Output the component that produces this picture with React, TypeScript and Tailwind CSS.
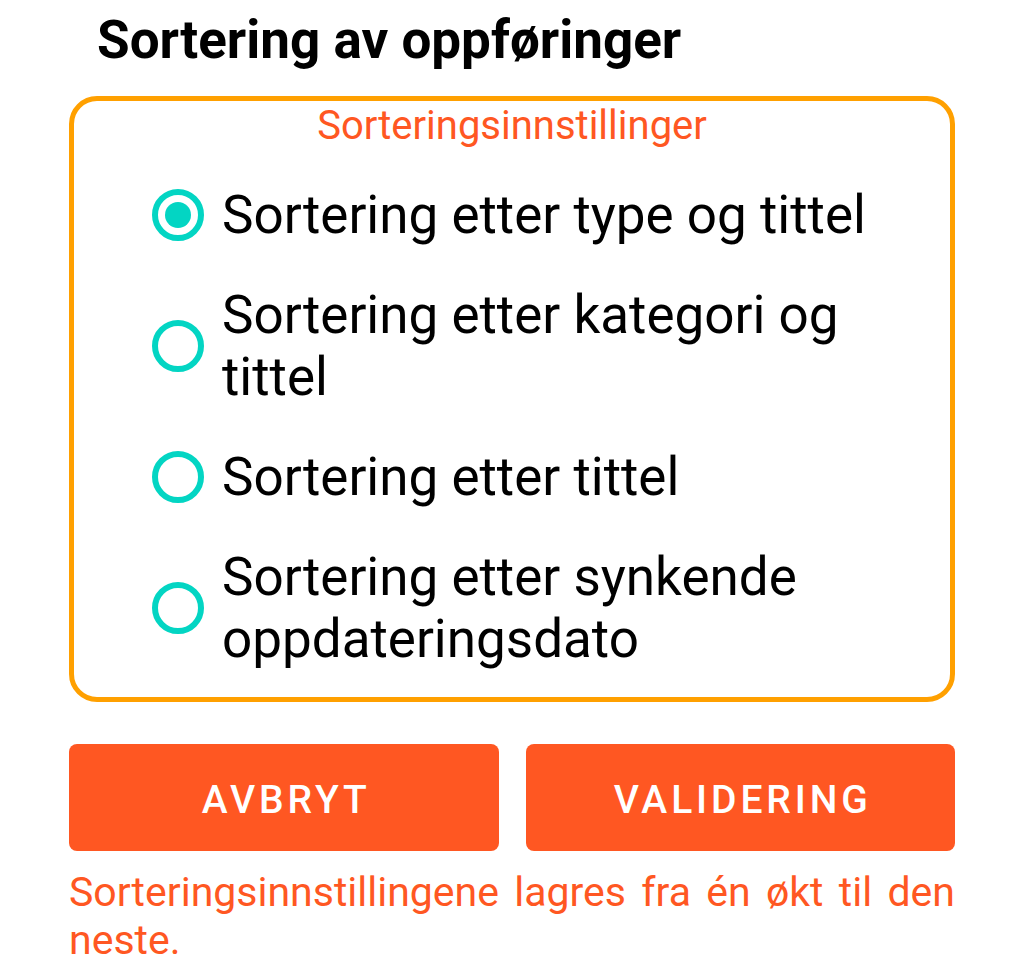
import React from "react";

const items = [
  { label: "Sortering etter type og tittel", checked: true },
  { label: "Sortering etter kategori og tittel", checked: false },
  { label: "Sortering etter tittel", checked: false },
  { label: "Sortering etter synkende oppdateringsdato", checked: false },
];

function Radio({ checked }: { checked: boolean }) {
  return (
    <div className="w-[52px] h-[52px] shrink-0 rounded-full border-[6px] border-[#03d5c3] flex items-center justify-center">
      {checked && <div className="w-[26px] h-[26px] rounded-full bg-[#03d5c3]" />}
    </div>
  );
}

export default function App() {
  return (
    <div
      className="w-[1024px] h-[980px] bg-white overflow-hidden"
      style={{ fontFamily: "Roboto, 'Noto Sans', sans-serif" }}
    >
      <div className="px-[69px] pt-[9px]">
        <h1 className="pl-[28px] text-[53px] leading-[62px] font-bold text-black">
          Sortering av oppføringer
        </h1>
        <div className="mt-[25px] h-[606px] border-[5px] border-[#ffa000] rounded-[28px] pt-[2px]">
          <div className="text-center text-[40px] leading-[46px] text-[#ff5722]">
            Sorteringsinnstillinger
          </div>
          <div className="mt-[35px] flex flex-col gap-[38px] pl-[78px] pr-[40px]">
            {items.map((it) => (
              <div key={it.label} className="flex items-center gap-[18px]">
                <Radio checked={it.checked} />
                <div className="text-[53px] leading-[62px] text-black">{it.label}</div>
              </div>
            ))}
          </div>
        </div>
        <div className="mt-[42px] flex gap-[27px]">
          <div className="flex-1 h-[107px] rounded-[8px] bg-[#ff5722] flex items-center justify-center pt-[6px] pl-[5px] text-white text-[39px] font-medium tracking-[0.1em]">
            AVBRYT
          </div>
          <div className="flex-1 h-[107px] rounded-[8px] bg-[#ff5722] flex items-center justify-center pt-[6px] pl-[5px] text-white text-[39px] font-medium tracking-[0.1em]">
            VALIDERING
          </div>
        </div>
        <p className="mt-[17px] text-[41px] leading-[48px] text-[#ff5722] text-justify">
          Sorteringsinnstillingene lagres fra én økt til den neste.
        </p>
      </div>
    </div>
  );
}
